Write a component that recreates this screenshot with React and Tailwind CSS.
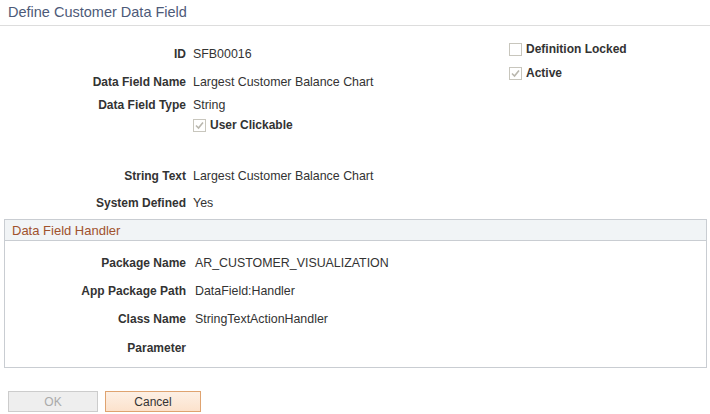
import React from "react";

function Check({ checked }) {
  return (
    <span className="inline-flex w-[13px] h-[13px] border border-[#c8c6bd] bg-white items-center justify-center shrink-0">
      {checked && (
        <svg width="11" height="11" viewBox="0 0 11 11">
          <path d="M2 5.5 L4.5 8 L9 2.5" fill="none" stroke="#b9b7ae" strokeWidth="1.6" />
        </svg>
      )}
    </span>
  );
}

function Row({ label, value, h = "h-[20px]", lw = "w-[186px]", gap = "gap-[7px]", extra = "" }) {
  return (
    <div className={`flex items-center ${h} ${gap} ${extra}`}>
      <div className={`${lw} text-right font-bold text-[#333333]`}>{label}</div>
      <div className="text-[#333333] text-[12.4px]">{value}</div>
    </div>
  );
}

export default function App() {
  return (
    <div
      className="w-[710px] h-[414px] bg-white text-[12px] leading-none overflow-hidden"
      style={{ fontFamily: '"Liberation Sans", Arial, sans-serif' }}
    >
      <div className="h-[26px] border-b border-[#dddddd] pl-[8px] flex items-center">
        <span className="text-[14.5px] text-[#4d5a78] pb-[1px]">Define Customer Data Field</span>
      </div>

      <div className="flex">
        <div className="w-[509px]">
          <Row label="ID" value="SFB00016" extra="mt-[18px]" />
          <Row label="Data Field Name" value="Largest Customer Balance Chart" extra="mt-[8px]" />
          <Row label="Data Field Type" value="String" extra="mt-[3px]" />
          <div className="flex items-center h-[20px] pl-[193px] gap-[4px]">
            <Check checked />
            <span className="font-bold text-[#333333]">User Clickable</span>
          </div>
          <Row label="String Text" value="Largest Customer Balance Chart" extra="mt-[31px]" />
          <Row label="System Defined" value="Yes" extra="mt-[7px]" />
        </div>
        <div className="pt-[12px]">
          <div className="flex items-center h-[22px] gap-[4px]">
            <Check />
            <span className="font-bold text-[#333333]">Definition Locked</span>
          </div>
          <div className="flex items-center h-[20px] mt-[3px] gap-[4px]">
            <Check checked />
            <span className="font-bold text-[#333333]">Active</span>
          </div>
        </div>
      </div>

      <div className="ml-[4px] mt-[6px] w-[703px] h-[149px] border border-[#c9cdd2]">
        <div className="h-[21px] bg-[#f1f4f6] border-b border-[#c9cdd2] flex items-center pl-[7px]">
          <span className="text-[13px] text-[#a0522d]">Data Field Handler</span>
        </div>
        <Row label="Package Name" value="AR_CUSTOMER_VISUALIZATION" lw="w-[181px]" gap="gap-[9px]" extra="mt-[12px]" />
        <Row label="App Package Path" value="DataField:Handler" lw="w-[181px]" gap="gap-[9px]" extra="mt-[8px]" />
        <Row label="Class Name" value="StringTextActionHandler" lw="w-[181px]" gap="gap-[9px]" extra="mt-[8px]" />
        <Row label="Parameter" value="" lw="w-[181px]" gap="gap-[9px]" extra="mt-[9px]" />
      </div>

      <div className="flex gap-[7px] ml-[8px] mt-[23px]">
        <button className="w-[90px] h-[21px] border border-[#cccccc] bg-[#eeeeee] text-[#aaaaaa] text-[12px]">
          OK
        </button>
        <button className="w-[96px] h-[21px] border border-[#dfa370] bg-gradient-to-b from-[#fdf0e5] to-[#fce2cc] text-[#333333] text-[12px]">
          Cancel
        </button>
      </div>
    </div>
  );
}
